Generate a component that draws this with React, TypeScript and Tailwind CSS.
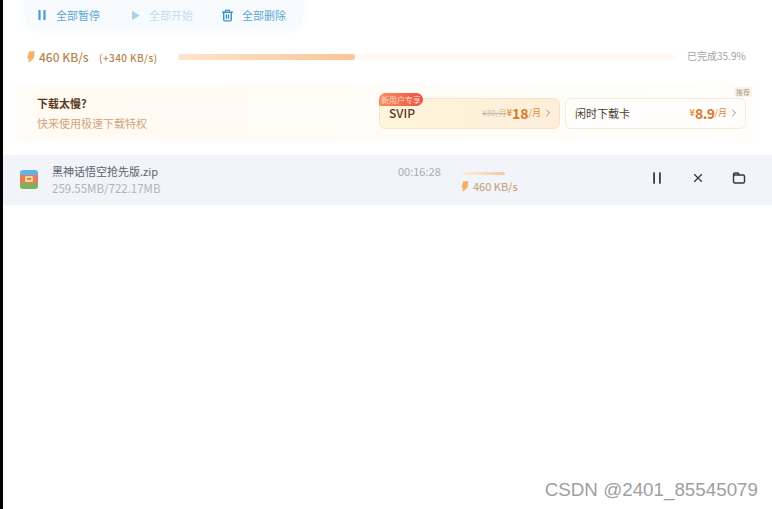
import { Trash2, X, ChevronRight } from "lucide-react";

const CJK = "font-['Noto_Sans_CJK_SC','Noto_Sans',sans-serif]";

function Bolt({ className }: { className: string }) {
  return (
    <svg viewBox="0 0 8 12" className={className}>
      <path d="M1.8 1 Q2 .3 2.8 .3 L7.8 .3 L7 4.2 L7.9 4.2 Q6.4 9 1.2 11.7 L1.8 7.4 L.2 7.4 Z" fill="#f5b266" />
    </svg>
  );
}

function PauseBars({ w, color, className }: { w: number; color: string; className: string }) {
  return (
    <svg viewBox="0 0 12 12" className={className}>
      <rect x={6 - 2.5 - w / 2} y="1" width={w} height="10" rx="0.6" fill={color} />
      <rect x={6 + 2.5 - w / 2} y="1" width={w} height="10" rx="0.6" fill={color} />
    </svg>
  );
}

function ToolBtn({ icon, label, faded, width }: { icon: React.ReactNode; label: string; faded?: boolean; width: string }) {
  return (
    <div className={`flex items-center gap-[8px] ${width}`}>
      {icon}
      <span className={`text-[11px] ${faded ? "text-[#c3dcec]" : "text-[#5fa8d3]"}`}>{label}</span>
    </div>
  );
}

export default function App() {
  return (
    <div className={`relative h-[509px] w-[772px] overflow-hidden border-l-[3px] border-black bg-white ${CJK}`}>
      {/* toolbar */}
      <div className="ml-[22px] flex h-[30px] w-[278px] items-center rounded-b-[14px] bg-[#f8fbfe] pl-[11px] shadow-[0_0_6px_2px_#f8fbfe]">
        <ToolBtn
          width="w-[94px]"
          label="全部暂停"
          icon={<PauseBars w={2.2} color="#4a9ccd" className="h-[12px] w-[12px]" />}
        />
        <ToolBtn
          width="w-[91px]"
          faded
          label="全部开始"
          icon={
            <svg viewBox="0 0 11 11" className="h-[11px] w-[11px]">
              <path d="M2 1 L10 5.5 L2 10 Z" fill="#a9d3ec" />
            </svg>
          }
        />
        <ToolBtn
          width="w-[80px]"
          label="全部删除"
          icon={<Trash2 size={13} strokeWidth={2.6} className="text-[#3f93c4]" />}
        />
      </div>

      {/* total speed */}
      <div className="mt-[18px] flex h-[18px] items-center pl-[24px]">
        <Bolt className="h-[12px] w-[8px]" />
        <span className="ml-[4px] w-[60px] text-[12px] font-medium text-[#b9854f]">460 KB/s</span>
        <span className="w-[79px] text-[10px] font-medium tracking-[0.4px] text-[#b9854f]">(+340 KB/s)</span>
        <div className="h-[6px] w-[497px] rounded-full bg-[#fffaf3]">
          <div className="h-full w-[177px] rounded-full bg-gradient-to-r from-[#fde5cb] to-[#f9c597]" />
        </div>
        <span className="mb-[3px] ml-[12px] text-[10px] text-[#a3a3a3]">已完成35.9%</span>
      </div>

      {/* promo */}
      <div className="mt-[19px] flex h-[56px] w-[757px] items-center bg-gradient-to-r from-white via-[#fffaf2] via-[6%] to-[#fffefc] pl-[34px]">
        <div className="w-[342px]">
          <p className="text-[11px] leading-[16px] font-bold text-[#5b3a1e]">下载太慢?</p>
          <p className="mt-[5px] text-[11px] leading-[15px] text-[#d3a57c]">快来使用极速下载特权</p>
        </div>
        <div className="relative flex h-[31px] w-[181px] items-center rounded-[6px] border border-[#fae3c4] bg-gradient-to-r from-[#fff5dc] to-[#fdeed9] pl-[9px] pr-[5px]">
          <span className="absolute -top-[6px] -left-px rounded-t-[8px] rounded-br-[8px] rounded-bl-[2px] bg-gradient-to-r from-[#f48e5d] to-[#ee4f46] px-[2px] text-[8px] leading-[13px] text-[#ffd9c7]">
            新用户专享
          </span>
          <span className="text-[12px] font-medium text-[#5b3a1e]">SVIP</span>
          <span className="ml-auto text-[8px] text-[#c9b8a2] line-through">¥30/月</span>
          <span className="text-[9px] font-bold text-[#e8933f]">¥</span>
          <span className="text-[14px] leading-none font-bold text-[#d9792c]">18</span>
          <span className="text-[9px] text-[#d9893f]">/月</span>
          <ChevronRight size={12} className="ml-[1px] text-[#9c8a78]" />
        </div>
        <div className="relative ml-[5px] flex h-[31px] w-[181px] items-center rounded-[6px] border border-[#f7ead9] bg-[#fffefc] pl-[9px] pr-[5px]">
          <span className="absolute -top-[12px] right-[-7px] rounded-[2px] bg-[#faf3ea] px-[2px] text-[7px] leading-[10px] text-[#a89a88]">
            推荐
          </span>
          <span className="text-[11px] text-[#4d3b2a]">闲时下载卡</span>
          <span className="ml-auto text-[9px] font-bold text-[#e8933f]">¥</span>
          <span className="text-[14px] leading-none font-bold tracking-[-0.5px] text-[#d9792c]">8.9</span>
          <span className="text-[9px] text-[#d9893f]">/月</span>
          <ChevronRight size={12} className="ml-[1px] text-[#9c8a78]" />
        </div>
      </div>

      {/* download row */}
      <div className="mt-[14px] flex h-[50px] items-center bg-[#f1f4f9] pl-[17px]">
        <svg viewBox="0 0 18 19" className="mb-[1px] h-[19px] w-[18px] shrink-0">
          <rect width="18" height="9" rx="3" fill="#5cb4ea" />
          <rect y="10" width="18" height="9" rx="3" fill="#7cb35a" />
          <rect y="5" width="18" height="8" fill="#ee7a5e" />
          <rect x="5" y="6" width="8" height="6" rx="1" fill="#f7d58f" />
          <rect x="7" y="8" width="4" height="1.5" fill="#c4763f" />
        </svg>
        <div className="ml-[14px] w-[346px]">
          <p className="-mt-px text-[11px] leading-[16px] text-[#5c626c]">黑神话悟空抢先版.zip</p>
          <p className="mt-[2px] text-[11.5px] leading-[15px] text-[#b0b4ba]">259.55MB/722.17MB</p>
        </div>
        <span className="mb-[17px] w-[63px] text-[11px] text-[#a9adb3]">00:16:28</span>
        <div className="mt-[7px] w-[189px]">
          <div className="h-[3px] w-[44px] rounded-full bg-gradient-to-r from-[#fdeedd] to-[#f9c79c]" />
          <div className="mt-[3px] flex items-center">
            <Bolt className="h-[11px] w-[8px]" />
            <span className="ml-[4px] text-[11px] text-[#c39a72]">460 KB/s</span>
          </div>
        </div>
        <PauseBars w={1.5} color="#33363b" className="mb-[4px] h-[14px] w-[14px]" />
        <X size={14} strokeWidth={2} className="mb-[4px] ml-[27px] text-[#33363b]" />
        <svg viewBox="0 0 14 14" className="mb-[4px] ml-[27px] h-[14px] w-[14px]" fill="none" stroke="#33363b" strokeWidth="1.4" strokeLinejoin="round">
          <path d="M1.5 3.5 Q1.5 2 3 2 H6 L7.5 4 H11 Q12.5 4 12.5 5.5 V10.5 Q12.5 12 11 12 H3 Q1.5 12 1.5 10.5 Z M1.5 4 H7.5" />
        </svg>
      </div>

      {/* watermark */}
      <span className="absolute right-[14px] bottom-[5px] font-['Liberation_Sans',sans-serif] text-[18.8px] text-[#9f9f9f]">
        CSDN @2401_85545079
      </span>
    </div>
  );
}
